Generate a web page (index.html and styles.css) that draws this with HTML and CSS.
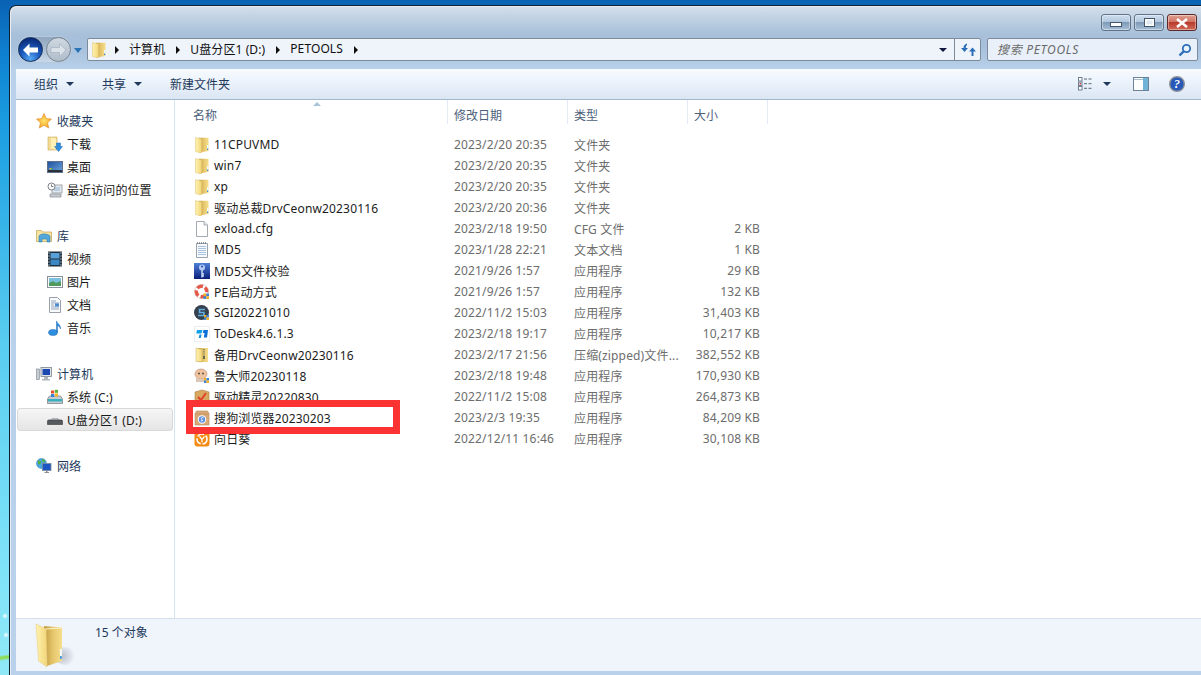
FILE: index.html
```html
<!DOCTYPE html>
<html lang="zh">
<head>
    <meta charset="utf-8">
    <title>PETOOLS</title>
    <link rel="stylesheet" href="styles.css">
</head>
<body>
<svg class="defs" xmlns="http://www.w3.org/2000/svg">
    <defs>
        <linearGradient id="gFold" x1="0" y1="0" x2="1" y2="0"><stop offset="0" stop-color="#fff2b0"/><stop offset="1" stop-color="#f2d678"/></linearGradient>
        <linearGradient id="gBack" x1="0" y1="0" x2="1" y2="0"><stop offset="0" stop-color="#c09a40"/><stop offset=".5" stop-color="#e6c66c"/><stop offset="1" stop-color="#f6de8c"/></linearGradient>
        <linearGradient id="gBlue" x1="0" y1="0" x2="0" y2="1"><stop offset="0" stop-color="#4d7fd8"/><stop offset="1" stop-color="#0a1f7a"/></linearGradient>
        <linearGradient id="gScreen" x1="0" y1="0" x2="1" y2="1"><stop offset="0" stop-color="#1d4f9c"/><stop offset="1" stop-color="#6fa8e0"/></linearGradient>
        <radialGradient id="gStar" cx=".5" cy=".5" r=".6"><stop offset="0" stop-color="#ffe36a"/><stop offset="1" stop-color="#f59a1c"/></radialGradient>
        <radialGradient id="gShadow" cx=".3" cy=".5" r=".7"><stop offset="0" stop-color="#8a8f98" stop-opacity=".55"/><stop offset="1" stop-color="#8a8f98" stop-opacity="0"/></radialGradient>
        <symbol id="i-folder" viewBox="0 0 16 16">
            <path d="M5 .8h9.500v13.200L5 15.500z" fill="url(#gBack)"/>
            <path d="M1.500 .5 7.500 2v14L1.500 14.500z" fill="url(#gFold)" stroke="#dcc070" stroke-width=".5"/>
            <rect x="13" y="8" width="1.200" height="5" fill="#eef8ff"/>
            <rect x="13" y="11.500" width="1.200" height="1.500" fill="#3b8ad0"/>
        </symbol>
        <symbol id="i-zipfolder" viewBox="0 0 16 16">
            <path d="M4 1h10v14H4z" fill="url(#gBack)"/>
            <path d="M2 1l6 1.400V15l-6-.6z" fill="url(#gFold)" stroke="#c8a858" stroke-width=".5"/>
            <path d="M10 2v11" stroke="#7a7a5a" stroke-width="1.600" stroke-dasharray="1.200 1"/>
            <rect x="9" y="9" width="2" height="3" fill="#6a6a50"/>
        </symbol>
        <symbol id="i-file" viewBox="0 0 16 16">
            <path d="M2.500 .5h7.500l3.500 3.500v11.500h-11z" fill="#fff" stroke="#a3aab2"/>
            <path d="M10 .5v3.500h3.500" fill="#e8ecf0" stroke="#a3aab2"/>
        </symbol>
        <symbol id="i-text" viewBox="0 0 16 16">
            <path d="M2.500 1.500h11v14h-11z" fill="#f6f8fb" stroke="#9aa3ae"/>
            <path d="M4 4.500h8M4 6.500h8M4 8.500h8M4 10.500h8M4 12.500h8" stroke="#a8c4e0"/>
            <path d="M3 1h1M5 1h1M7 1h1M9 1h1M11 1h1" stroke="#707880" stroke-width="1.400"/>
        </symbol>
        <symbol id="i-key" viewBox="0 0 16 16">
            <rect width="16" height="16" fill="url(#gBlue)"/>
            <circle cx="8" cy="4.500" r="3" fill="#b4cdf6"/>
            <circle cx="8" cy="3.500" r=".9" fill="#1a3c98"/>
            <path d="M8 7v7.500M8 11h2M8 13h2" stroke="#cfe0fa" stroke-width="1.400"/>
        </symbol>
        <symbol id="i-ring" viewBox="0 0 16 16">
            <circle cx="7.500" cy="7.500" r="7" fill="none" stroke="#c8b8b4" stroke-width=".6"/>
            <circle cx="7.500" cy="7.500" r="5.200" fill="none" stroke="#e4584a" stroke-width="3.400" stroke-dasharray="6 2.170" stroke-dashoffset="-3"/>
            <path d="M9.500 9.500h2.800v2.800H9.500z" fill="#f4b020"/><path d="M12.300 9.500H15v2.800h-2.700z" fill="#3b84d6"/><path d="M9.500 12.300h2.800V15H9.500z" fill="#3b84d6"/><path d="M12.300 12.300H15V15h-2.700z" fill="#f4b020"/>
        </symbol>
        <symbol id="i-sgi" viewBox="0 0 16 16">
            <circle cx="7.500" cy="7.500" r="7.500" fill="#36414e"/>
            <path d="M11 4.500H5.500v3H10v3H4" fill="none" stroke="#62aee0" stroke-width="1.500"/>
            <path d="M10 10h2.500v2.500H10z" fill="#f4b020"/><path d="M12.500 10H15v2.500h-2.500z" fill="#3b84d6"/><path d="M10 12.500h2.500V15H10z" fill="#3b84d6"/><path d="M12.500 12.500H15V15h-2.500z" fill="#f4b020"/>
        </symbol>
        <symbol id="i-todesk" viewBox="0 0 16 16">
            <rect x=".5" y=".5" width="15" height="15" fill="#fff" stroke="#eceef2"/>
            <path d="M3 4h5.500L7.500 7.500H2.200z" fill="#12a0ea"/>
            <path d="M9.500 4H14l-1 7.500H9.800L10.600 7H8.800z" fill="#0c6fd8"/>
            <path d="M5.500 8.500h2L6.800 12H4.800z" fill="#0f8ae0"/>
        </symbol>
        <symbol id="i-ludashi" viewBox="0 0 16 16">
            <ellipse cx="7" cy="6" rx="6" ry="5" fill="#eec3a0" stroke="#b98a70" stroke-width=".6"/>
            <path d="M2 9c2 3 8 3 10 0v5H2z" fill="#d9c8b8"/>
            <circle cx="5" cy="5.500" r=".9" fill="#54402f"/><circle cx="9" cy="5.500" r=".9" fill="#54402f"/>
            <path d="M10 10h2.500v2.500H10z" fill="#f4b020"/><path d="M12.500 10H15v2.500h-2.500z" fill="#3b84d6"/><path d="M10 12.500h2.500V15H10z" fill="#3b84d6"/><path d="M12.500 12.500H15V15h-2.500z" fill="#f4b020"/>
        </symbol>
        <symbol id="i-driver" viewBox="0 0 16 16">
            <path d="M1 3l7-2 7 2v11H1z" fill="#d9a860" stroke="#a97c3c" stroke-width=".6"/>
            <path d="M4 8l3 3 5-7" fill="none" stroke="#e2402c" stroke-width="2"/>
        </symbol>
        <symbol id="i-sogou" viewBox="0 0 16 16">
            <path d="M1 3.500 2.500 1h11L15 3.500V15H1z" fill="#d9a978" stroke="#b88a58" stroke-width=".6"/>
            <rect x="1" y="3.500" width="14" height="1" fill="#c49464"/>
            <circle cx="8" cy="9.500" r="4.200" fill="#fff"/>
            <circle cx="8" cy="9.500" r="3.200" fill="#5a8fe0"/>
            <path d="M9.500 7.800C8 7 6.500 8 7.800 9.300s.8 2.200-1 1.500" fill="none" stroke="#fff"/>
        </symbol>
        <symbol id="i-sun" viewBox="0 0 16 16">
            <rect x=".5" y=".5" width="15" height="15" rx="3" fill="#f58a12"/>
            <circle cx="8" cy="8" r="5" fill="none" stroke="#fff" stroke-width="1.600" stroke-dasharray="7 2"/>
            <path d="M5.500 5.500 8 8.500l2.500-3M8 8.500v3" fill="none" stroke="#fff" stroke-width="1.200"/>
        </symbol>
        <symbol id="i-star" viewBox="0 0 16 16">
            <path d="M8 .5l2.300 5 5.200 .6-3.900 3.600 1.100 5.300L8 12.300 3.300 15l1.100-5.300L.5 6.100l5.200-.6z" fill="url(#gStar)" stroke="#e08a28" stroke-width=".6"/>
        </symbol>
        <symbol id="i-download" viewBox="0 0 16 16">
            <path d="M1 1h9v13H1z" fill="#f4dc94" stroke="#c8a858" stroke-width=".6"/>
            <path d="M4 1.500l5 1v11l-5-1z" fill="#fff0b8"/>
            <path d="M9.500 7h4v3.500H15.500l-4 5-4-5h2z" fill="#2f8ee0" stroke="#1c68b4" stroke-width=".5"/>
        </symbol>
        <symbol id="i-desktop" viewBox="0 0 16 16">
            <rect x=".5" y="2.500" width="15" height="11" fill="url(#gScreen)" stroke="#5d6f8a"/>
            <rect x="1" y="11" width="14" height="2" fill="#2a2f3a"/>
            <path d="M2.500 9h1.500v1.500H2.500z" fill="#e8c040"/><path d="M4 9h1.500v1.500H4z" fill="#5ab050"/>
        </symbol>
        <symbol id="i-recent" viewBox="0 0 16 16">
            <rect x="5" y="3" width="10" height="8" fill="#e4e8ec" stroke="#8f969e" stroke-width=".8"/>
            <rect x="7" y="5" width="6" height="4" fill="#b8cfe4"/>
            <path d="M3 12h11v3H3z" fill="#c8ccd0" stroke="#8f969e" stroke-width=".8"/>
            <circle cx="4.500" cy="4.500" r="3.500" fill="#fff" stroke="#7a8088"/>
            <path d="M4.500 2.500v2h1.800" fill="none" stroke="#505860" stroke-width=".8"/>
        </symbol>
        <symbol id="i-lib" viewBox="0 0 16 16">
            <path d="M.5 13.500V2.500h5l1 1.500h9v9.500z" fill="#f6e4a0" stroke="#c8ac60" stroke-width=".8"/>
            <path d="M3 14V8.500C3 7 5 6 8 6s6 1 6 2.500V14h-3v-3H6v3z" fill="#52a8dc" stroke="#2878b0" stroke-width=".6"/>
        </symbol>
        <symbol id="i-video" viewBox="0 0 16 16">
            <rect x="1" y=".5" width="14" height="15" fill="#20303c"/>
            <rect x="3.500" y="2" width="9" height="5.500" fill="#5aa0d8"/>
            <rect x="3.500" y="8.500" width="9" height="5.500" fill="#3c88c4"/>
            <path d="M1.500 2h1M1.500 5h1M1.500 8h1M1.500 11h1M1.500 14h1M13.500 2h1M13.500 5h1M13.500 8h1M13.500 11h1M13.500 14h1" stroke="#b8c8d0" stroke-width="1.300"/>
        </symbol>
        <symbol id="i-pic" viewBox="0 0 16 16">
            <rect x=".5" y="2.500" width="15" height="11" fill="#fff" stroke="#8a9098"/>
            <rect x="2" y="4" width="12" height="8" fill="#7cc0e0"/>
            <path d="M2 9l4-2 3 2 5-2v5H2z" fill="#4f9a5c"/>
        </symbol>
        <symbol id="i-doc" viewBox="0 0 16 16">
            <path d="M2.500 .5h8l3 3v12h-11z" fill="#fafbfd" stroke="#9aa0aa"/>
            <path d="M4 4h5M4 6h8M4 8h3M4 10h8M4 12h8" stroke="#7a8aa8" stroke-width=".8"/>
            <rect x="8" y="6.500" width="4" height="3" fill="#4a8ad0"/>
        </symbol>
        <symbol id="i-music" viewBox="0 0 16 16">
            <ellipse cx="6" cy="12.500" rx="4.500" ry="3" fill="#2f8ee0" stroke="#1c68b4" stroke-width=".5"/>
            <path d="M9.500 12V1c.5 2.500 4.500 3.500 4 8-.5-2.500-2-3-3-3.500V12z" fill="#2f8ee0" stroke="#1c68b4" stroke-width=".5"/>
        </symbol>
        <symbol id="i-pc" viewBox="0 0 16 16">
            <rect x="5" y="1.500" width="10.500" height="9" fill="#dfe4ea" stroke="#7a8490" stroke-width=".8"/>
            <rect x="6.500" y="3" width="7.500" height="6" fill="#1c46b0"/>
            <path d="M8 11h4v2h2v1.500H6V13h2z" fill="#b0b6bc"/>
            <rect x=".5" y="3" width="3" height="10.500" fill="#c8ccd2" stroke="#7a8490" stroke-width=".6"/>
        </symbol>
        <symbol id="i-sysdrive" viewBox="0 0 16 16">
            <path d="M.5 10l2-3h11l2 3v4.500H.5z" fill="#c8ccd0" stroke="#70787f" stroke-width=".7"/>
            <rect x="1" y="10" width="14" height="2.500" fill="#38b0c0"/>
            <path d="M4 1.500h3.200v3H4z" fill="#e8502c"/><path d="M7.800 .8H11v3H7.800z" fill="#60b040"/><path d="M4 5h3.200v3H4z" fill="#3c80d8"/><path d="M7.800 4.400H11v3H7.800z" fill="#f4b820"/>
        </symbol>
        <symbol id="i-usb" viewBox="0 0 16 16">
            <path d="M3 8.500 5 6.500h6l2 2z" fill="#c4c8cc" stroke="#8a8f94" stroke-width=".5"/>
            <path d="M.5 9c0-.5 .5-1 1-1h13c.5 0 1 .5 1 1v3.500H.5z" fill="#55595e" stroke="#35383c" stroke-width=".6"/>
        </symbol>
        <symbol id="i-net" viewBox="0 0 16 16">
            <circle cx="5.500" cy="5.500" r="5" fill="#48a8e0" stroke="#2a78b0" stroke-width=".5"/>
            <path d="M2 3c2-1 3 0 3 1.500S3 7 2 6zM6 1c2 0 3 1 3 2S7 5 6.500 4z" fill="#58b040"/>
            <rect x="6.500" y="5.500" width="8.500" height="7" fill="#1c56c0" stroke="#7a8a9c" stroke-width=".8"/>
            <path d="M10 12.500h1.500v1.500H13v1H8.500v-1H10z" fill="#8a9098"/>
        </symbol>
        <symbol id="i-bigfolder" viewBox="0 0 40 45">
            <ellipse cx="30" cy="33" rx="10" ry="9" fill="url(#gShadow)"/>
            <path d="M9 3 27 4.500V38L12 43z" fill="url(#gBack)"/>
            <path d="M1 1 11 6 12 44 3.500 38z" fill="url(#gFold)" stroke="#e8d088" stroke-width=".6"/>
            <path d="M11 6 26 5" stroke="#fff6c8"/>
            <rect x="25" y="26" width="1.800" height="10" fill="#f4fbff"/>
            <rect x="25" y="33" width="1.800" height="3" fill="#4a9ad8"/>
        </symbol>
    </defs>
</svg>

<div class="window">
    <div class="caption">
        <button class="cap-btn"><span class="glyph-min"></span></button>
        <button class="cap-btn"><span class="glyph-max"></span></button>
        <button class="cap-btn close">
            <svg width="14" height="10" viewBox="0 0 14 10"><path d="M2 1l10 8M12 1L2 9" stroke="#fff" stroke-width="2.600"/></svg>
        </button>
    </div>

    <div class="navbar">
        <div class="nav-btns">
            <div class="nav-pill">
                <div class="round back">
                    <svg width="17" height="14" viewBox="0 0 17 14"><path d="M7.500 .5 1 7l6.500 6.500V9.500H16v-5H7.500z" fill="#fff"/></svg>
                </div>
                <div class="round forward">
                    <svg width="17" height="14" viewBox="0 0 17 14"><path d="M9.500 .5 16 7l-6.500 6.500V9.500H1v-5h8.500z" fill="#dbe2ea" stroke="#aab6c2" stroke-width=".8"/></svg>
                </div>
            </div>
            <span class="nav-drop"></span>
        </div>
        <div class="address">
            <svg class="ico addr-ico"><use href="#i-folder"/></svg>
            <span class="crumb-arrow"></span>
            <span class="crumb">计算机</span>
            <span class="crumb-arrow"></span>
            <span class="crumb">U盘分区1 (D:)</span>
            <span class="crumb-arrow"></span>
            <span class="crumb">PETOOLS</span>
            <span class="crumb-arrow"></span>
            <span class="addr-space"></span>
            <span class="addr-drop"></span>
            <span class="refresh">
                <svg width="16" height="14" viewBox="0 0 16 14"><path d="M7 .5C4.500 1 3.500 3 3.500 5H1l3.500 4L8 5H5.800C5.800 3.500 6.200 2.500 7 2z" fill="#2c6fb8"/><path d="M11.500 13V8.500H9L12.500 4.500 16 8.500h-2.500V13z" fill="#2c6fb8"/></svg>
            </span>
        </div>
        <div class="search">
            <span class="search-text">搜索 PETOOLS</span>
            <svg width="14" height="14" viewBox="0 0 14 14"><circle cx="8.500" cy="5.500" r="3.700" fill="#eaf2fb" stroke="#2c6fb8" stroke-width="1.800"/><path d="M5.500 8.500 1.500 12.500" stroke="#2c6fb8" stroke-width="2.400"/></svg>
        </div>
    </div>

    <div class="toolbar">
        <span class="tool">组织<span class="tool-arrow"></span></span>
        <span class="tool">共享<span class="tool-arrow"></span></span>
        <span class="tool">新建文件夹</span>
        <span class="tool-space"></span>
        <span class="views">
            <svg width="16" height="14" viewBox="0 0 16 14"><rect x=".5" y=".5" width="3.500" height="3.500" fill="#fff" stroke="#6e7f92"/><rect x=".5" y="5" width="3.500" height="3.500" fill="#fff" stroke="#6e7f92"/><rect x=".5" y="9.500" width="3.500" height="3.500" fill="#fff" stroke="#6e7f92"/><rect x="1.500" y="6" width="1.500" height="1.500" fill="#d83030"/><path d="M6 2h3M10.500 2h3M6 6.700h3M10.500 6.700h3M6 11.300h3M10.500 11.300h3" stroke="#55677c"/></svg>
            <span class="tool-arrow"></span>
        </span>
        <svg class="preview" width="16" height="14" viewBox="0 0 16 14"><rect x=".5" y=".5" width="15" height="13" fill="#fff" stroke="#6e8296"/><rect x="10" y="1" width="5" height="12" fill="#6fb4d8"/><path d="M1 2.500h9" stroke="#a8bccf"/></svg>
        <svg class="help" width="16" height="16" viewBox="0 0 16 16"><circle cx="8" cy="8" r="7.300" fill="#2858b8" stroke="#8a9098" stroke-width="1.400"/><text x="8" y="12" text-anchor="middle" class="help-q">?</text></svg>
    </div>

    <div class="main">
        <nav class="tree">
            <div class="tree-group">
                <div class="tree-row top"><svg class="ico"><use href="#i-star"/></svg>收藏夹</div>
                <div class="tree-row"><svg class="ico"><use href="#i-download"/></svg>下载</div>
                <div class="tree-row"><svg class="ico"><use href="#i-desktop"/></svg>桌面</div>
                <div class="tree-row"><svg class="ico"><use href="#i-recent"/></svg>最近访问的位置</div>
            </div>
            <div class="tree-group">
                <div class="tree-row top"><svg class="ico"><use href="#i-lib"/></svg>库</div>
                <div class="tree-row"><svg class="ico"><use href="#i-video"/></svg>视频</div>
                <div class="tree-row"><svg class="ico"><use href="#i-pic"/></svg>图片</div>
                <div class="tree-row"><svg class="ico"><use href="#i-doc"/></svg>文档</div>
                <div class="tree-row"><svg class="ico"><use href="#i-music"/></svg>音乐</div>
            </div>
            <div class="tree-group">
                <div class="tree-row top"><svg class="ico"><use href="#i-pc"/></svg>计算机</div>
                <div class="tree-row"><svg class="ico"><use href="#i-sysdrive"/></svg>系统 (C:)</div>
                <div class="tree-row selected"><svg class="ico"><use href="#i-usb"/></svg>U盘分区1 (D:)</div>
            </div>
            <div class="tree-group">
                <div class="tree-row top"><svg class="ico"><use href="#i-net"/></svg>网络</div>
            </div>
        </nav>

        <section class="files">
            <div class="head">
                <div class="th th-name">名称<span class="sort"></span></div>
                <div class="th">修改日期</div>
                <div class="th">类型</div>
                <div class="th">大小</div>
            </div>
            <div class="rows">
                <div class="mark"></div>
                <div class="row"><div class="name"><svg class="ico"><use href="#i-folder"/></svg>11CPUVMD</div><div class="cell">2023/2/20 20:35</div><div class="cell">文件夹</div><div class="size"></div></div>
                <div class="row"><div class="name"><svg class="ico"><use href="#i-folder"/></svg>win7</div><div class="cell">2023/2/20 20:35</div><div class="cell">文件夹</div><div class="size"></div></div>
                <div class="row"><div class="name"><svg class="ico"><use href="#i-folder"/></svg>xp</div><div class="cell">2023/2/20 20:35</div><div class="cell">文件夹</div><div class="size"></div></div>
                <div class="row"><div class="name"><svg class="ico"><use href="#i-folder"/></svg>驱动总裁DrvCeonw20230116</div><div class="cell">2023/2/20 20:36</div><div class="cell">文件夹</div><div class="size"></div></div>
                <div class="row"><div class="name"><svg class="ico"><use href="#i-file"/></svg>exload.cfg</div><div class="cell">2023/2/18 19:50</div><div class="cell">CFG 文件</div><div class="size">2 KB</div></div>
                <div class="row"><div class="name"><svg class="ico"><use href="#i-text"/></svg>MD5</div><div class="cell">2023/1/28 22:21</div><div class="cell">文本文档</div><div class="size">1 KB</div></div>
                <div class="row"><div class="name"><svg class="ico"><use href="#i-key"/></svg>MD5文件校验</div><div class="cell">2021/9/26 1:57</div><div class="cell">应用程序</div><div class="size">29 KB</div></div>
                <div class="row"><div class="name"><svg class="ico"><use href="#i-ring"/></svg>PE启动方式</div><div class="cell">2021/9/26 1:57</div><div class="cell">应用程序</div><div class="size">132 KB</div></div>
                <div class="row"><div class="name"><svg class="ico"><use href="#i-sgi"/></svg>SGI20221010</div><div class="cell">2022/11/2 15:03</div><div class="cell">应用程序</div><div class="size">31,403 KB</div></div>
                <div class="row"><div class="name"><svg class="ico"><use href="#i-todesk"/></svg>ToDesk4.6.1.3</div><div class="cell">2023/2/18 19:17</div><div class="cell">应用程序</div><div class="size">10,217 KB</div></div>
                <div class="row"><div class="name"><svg class="ico"><use href="#i-zipfolder"/></svg>备用DrvCeonw20230116</div><div class="cell">2023/2/17 21:56</div><div class="cell">压缩(zipped)文件...</div><div class="size">382,552 KB</div></div>
                <div class="row"><div class="name"><svg class="ico"><use href="#i-ludashi"/></svg>鲁大师20230118</div><div class="cell">2023/2/18 19:48</div><div class="cell">应用程序</div><div class="size">170,930 KB</div></div>
                <div class="row"><div class="name"><svg class="ico"><use href="#i-driver"/></svg>驱动精灵20220830</div><div class="cell">2022/11/2 15:08</div><div class="cell">应用程序</div><div class="size">264,873 KB</div></div>
                <div class="row marked"><div class="name"><svg class="ico"><use href="#i-sogou"/></svg>搜狗浏览器20230203</div><div class="cell">2023/2/3 19:35</div><div class="cell">应用程序</div><div class="size">84,209 KB</div></div>
                <div class="row"><div class="name"><svg class="ico"><use href="#i-sun"/></svg>向日葵</div><div class="cell">2022/12/11 16:46</div><div class="cell">应用程序</div><div class="size">30,108 KB</div></div>
            </div>
        </section>
    </div>

    <footer class="status">
        <svg class="big-folder" width="40" height="45"><use href="#i-bigfolder"/></svg>
        <span>15 个对象</span>
    </footer>
</div>
</body>
</html>
```

FILE: styles.css
```css
html, body {
    margin: 0;
    height: 100%;
}
body {
    width: 1201px;
    height: 675px;
    overflow: hidden;
    font-family: "Noto Sans", "Noto Sans CJK SC", sans-serif;
    font-size: 12px;
    color: #1c1c1c;
    background:
        radial-gradient(circle at 5px 616px, #fff 0, rgba(255, 255, 255, 0) 3px),
        radial-gradient(circle at 6px 635px, #fff 0, rgba(255, 255, 255, 0) 3px),
        linear-gradient(172deg, rgba(140, 220, 80, 0) 649px, #8edc50 651px, #8edc50 652px, rgba(140, 220, 80, 0) 655px),
        linear-gradient(to bottom, #0a62b4 0, #0f84d2 60px, #1c9fe2 130px, #58cdf0 340px, #7de2f8 560px, #90e8f6 675px);
}
.defs {
    display: block;
    width: 0;
    height: 0;
}
.ico {
    width: 16px;
    height: 16px;
    flex: none;
}

/* window frame */
.window {
    box-sizing: border-box;
    width: 1192px;
    height: 670px;
    margin: 5px 0 0 9px;
    padding: 0 0 4px 6px;
    display: flex;
    flex-direction: column;
    border-top: 1px solid #10202e;
    border-left: 1px solid #10202e;
    border-top-left-radius: 7px;
    background: linear-gradient(to bottom, #d4dfea 0, #a8c0da 28px, #a6bfdb 40px, #b9d1ea 64px, #b9d1ea 100%);
    box-shadow: inset 1px 1px 0 #e8eef4;
}

/* caption buttons */
.caption {
    height: 16px;
    padding: 8px 4px 0 0;
    display: flex;
    justify-content: flex-end;
    gap: 3px;
}
.cap-btn {
    box-sizing: border-box;
    width: 30px;
    height: 17px;
    padding: 0;
    display: flex;
    align-items: center;
    justify-content: center;
    border: 1px solid #5f7389;
    border-radius: 3px;
    background: linear-gradient(to bottom, #cfdeee 0, #b3c8de 45%, #7f9ab8 50%, #a8c0d8 100%);
    box-shadow: inset 0 0 0 1px rgba(255, 255, 255, .4);
}
.cap-btn.close {
    border-color: #5a2a2a;
    background: linear-gradient(to bottom, #e0a090 0, #cf7566 45%, #b83c2c 50%, #d06a58 100%);
}
.glyph-min {
    width: 10px;
    height: 3px;
    margin-top: 3px;
    background: #fff;
    border: 1px solid #44566a;
}
.glyph-max {
    box-sizing: border-box;
    width: 11px;
    height: 9px;
    background: #dfe8f2;
    border: 1px solid #44566a;
    box-shadow: inset 0 0 0 1.5px #fff;
}

/* back, forward, address, search */
.navbar {
    height: 23px;
    margin-top: 8px;
    padding: 0 3px 0 2px;
    display: flex;
    align-items: center;
}
.nav-btns {
    width: 69px;
    display: flex;
    align-items: center;
    flex: none;
}
.nav-pill {
    display: flex;
    gap: 3px;
    border-radius: 14px;
    background: linear-gradient(to bottom, #8fa6bf, #c9d8e8);
    box-shadow: 0 0 0 1px #b6c9dd;
}
.round {
    box-sizing: border-box;
    width: 25px;
    height: 25px;
    border-radius: 50%;
    display: flex;
    align-items: center;
    justify-content: center;
}
.back {
    background: radial-gradient(circle at 50% 90%, #58a8f2 0, #1c5cc0 40%, #0b2a78 85%);
    border: 1px solid #14305e;
}
.forward {
    background: linear-gradient(to bottom, #cfd8e2, #b0bdcb);
    border: 1px solid #78868f;
}
.nav-drop {
    margin: 2px 0 0 3px;
    border-top: 5px solid #2b74b4;
    border-left: 4px solid transparent;
    border-right: 4px solid transparent;
}
.address {
    box-sizing: border-box;
    width: 894px;
    height: 23px;
    flex: none;
    display: flex;
    align-items: center;
    padding-left: 3px;
    border: 1px solid #7d8b9a;
    border-radius: 2px;
    background: #eff4fb;
    color: #101010;
}
.addr-ico {
    margin-right: 8px;
}
.crumb-arrow {
    flex: none;
    border-left: 4px solid #101010;
    border-top: 4px solid transparent;
    border-bottom: 4px solid transparent;
}
.crumb {
    margin: 0 11px 2px 10px;
    letter-spacing: .1px;
    white-space: nowrap;
}
.addr-space {
    flex: 1;
}
.addr-drop {
    margin-right: 7px;
    border-top: 4px solid #101840;
    border-left: 4px solid transparent;
    border-right: 4px solid transparent;
}
.refresh {
    align-self: stretch;
    width: 25px;
    display: flex;
    align-items: center;
    justify-content: center;
    border-left: 1px solid #7d8b9a;
}
.search {
    box-sizing: border-box;
    flex: 1;
    height: 23px;
    margin-left: 6px;
    padding: 0 5px 0 9px;
    display: flex;
    align-items: center;
    justify-content: space-between;
    border: 1px solid #7d8b9a;
    border-radius: 2px;
    background: #e9f0f9;
}
.search-text {
    margin-bottom: 2px;
    font-style: italic;
    letter-spacing: .7px;
    color: #6a6a6a;
}

/* command bar */
.toolbar {
    box-sizing: border-box;
    height: 31px;
    margin-top: 8px;
    padding: 0 16px 0 18px;
    flex: none;
    display: flex;
    align-items: center;
    color: #1e395b;
    border-bottom: 1px solid #a3b8ce;
    background: linear-gradient(to bottom, #f8fbff 0, #e9f1fa 50%, #dbe6f3 100%);
}
.tool {
    display: flex;
    align-items: center;
    margin-right: 28px;
}
.tool-arrow {
    margin-left: 8px;
    border-top: 4px solid #1e395b;
    border-left: 4px solid transparent;
    border-right: 4px solid transparent;
}
.tool-space {
    flex: 1;
}
.views {
    display: flex;
    align-items: center;
    margin-right: 22px;
}
.views .tool-arrow {
    margin-left: 9px;
}
.preview {
    margin-right: 20px;
}
.help-q {
    font-size: 12px;
    font-weight: 700;
    font-family: "Liberation Serif", serif;
    font-style: italic;
    fill: #fff;
}

/* navigation tree and file list */
.main {
    flex: 1;
    min-height: 0;
    display: flex;
    background: #fff;
}
.tree {
    box-sizing: border-box;
    width: 159px;
    flex: none;
    padding-top: 9px;
    border-right: 1px solid #d6e5f5;
    color: #1a1a1a;
    letter-spacing: .1px;
}
.tree-group {
    margin-bottom: 23px;
}
.tree-row {
    box-sizing: border-box;
    height: 23px;
    margin-left: 1px;
    margin-right: 1px;
    padding-left: 30px;
    display: flex;
    align-items: center;
    gap: 4px;
    white-space: nowrap;
}
.tree-row.top {
    padding-left: 19px;
    gap: 5px;
    color: #1e395b;
}
.tree-row.selected {
    border: 1px solid #d9d9d9;
    border-radius: 3px;
    padding-left: 29px;
    background: linear-gradient(to bottom, #f6f6f6, #e5e5e5);
}
.files {
    flex: 1;
    min-width: 0;
}
.head {
    height: 24px;
    display: grid;
    grid-template-columns: 273px 120px 120px 80px;
    color: #4c607a;
}
.th {
    position: relative;
    display: flex;
    align-items: center;
    padding: 6px 0 0 6px;
    border-right: 1px solid #e3ecf6;
}
.th-name {
    padding-left: 18px;
}
.sort {
    position: absolute;
    top: 2px;
    left: 138px;
    border-bottom: 4px solid #a8c4dc;
    border-left: 4px solid transparent;
    border-right: 4px solid transparent;
}
.rows {
    position: relative;
    padding-top: 10px;
}
.mark {
    position: absolute;
    z-index: 1;
    top: 276px;
    left: 11px;
    box-sizing: border-box;
    width: 214px;
    height: 34px;
    border: 7px solid #fb3333;
    background: #fff;
}
.row {
    height: 21px;
    display: grid;
    grid-template-columns: 272px 120px 120px 80px;
    align-items: center;
    color: #6d6d6d;
    white-space: nowrap;
    letter-spacing: .15px;
}
.row.marked {
    position: relative;
    z-index: 2;
}
.name {
    display: flex;
    align-items: center;
    gap: 4px;
    padding-left: 19px;
    color: #1c1c1c;
}
.cell {
    padding-left: 7px;
}
.size {
    padding-right: 7px;
    text-align: right;
}

/* details pane */
.status {
    box-sizing: border-box;
    height: 53px;
    flex: none;
    display: flex;
    align-items: flex-start;
    padding: 4px 0 0 19px;
    border-top: 1px solid #d5dfeb;
    background: #f0f4fb;
    color: #1e395b;
}
.status span {
    margin-left: 20px;
}
.big-folder {
    flex: none;
}
```
